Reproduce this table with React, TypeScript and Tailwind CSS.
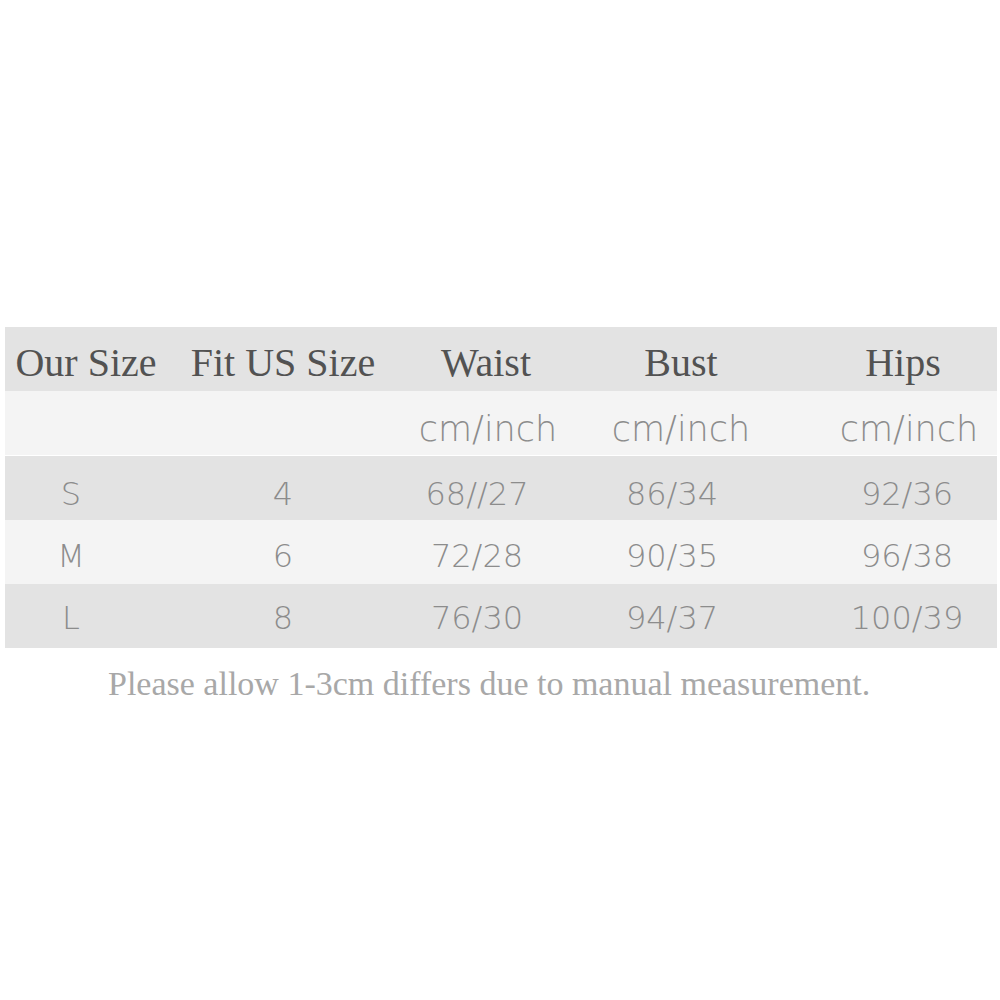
import React from "react";

const serif = { fontFamily: '"Liberation Serif", "Times New Roman", serif' };
const sans = { fontFamily: '"DejaVu Sans", "Liberation Sans", sans-serif' };

const cols = "grid grid-cols-[162px_232px_174px_216px_208px]";

const rows = [
  { bg: "bg-[#e3e3e3]", pt: "pt-[12px]", v: ["S", "4", "68//27", "86/34", "92/36"] },
  { bg: "bg-[#f4f4f4]", pt: "pt-[7px]", v: ["M", "6", "72/28", "90/35", "96/38"] },
  { bg: "bg-[#e3e3e3]", pt: "pt-[3px]", v: ["L", "8", "76/30", "94/37", "100/39"] },
];

export default function App() {
  return (
    <div className="w-[1000px] h-[1000px] bg-white pt-[327px]">
      <div className="ml-[5px] w-[992px]">
        <div className={`${cols} h-[64px] pt-[6px] bg-[#e3e3e3] items-center text-[40px] text-[#525252]`} style={serif}>
          <div className="text-center">Our Size</div>
          <div className="text-center">Fit US Size</div>
          <div className="text-center">Waist</div>
          <div className="text-center">Bust</div>
          <div className="text-center pl-[20px]">Hips</div>
        </div>
        <div className={`${cols} h-[64px] pt-[12px] bg-[#f4f4f4] items-center text-[35px] font-extralight text-[#8c8c8c]`} style={sans}>
          <div />
          <div />
          <div className="text-center pl-[4px]">cm/inch</div>
          <div className="text-center">cm/inch</div>
          <div className="text-center pl-[32px]">cm/inch</div>
        </div>
        <div className="h-[1px] bg-white" />
        {rows.map((r, i) => (
          <div key={i} className={`${cols} h-[64px] ${r.pt} ${r.bg} items-center text-[32px] font-extralight text-[#8c8c8c]`} style={sans}>
            <div className="text-center pr-[30px]">{r.v[0]}</div>
            <div className="text-center">{r.v[1]}</div>
            <div className="text-center pr-[18px]">{r.v[2]}</div>
            <div className="text-center pr-[18px]">{r.v[3]}</div>
            <div className="text-center pl-[28px]">{r.v[4]}</div>
          </div>
        ))}
      </div>
      <div className="pl-[108px] mt-[16px] text-[34px] leading-[40px] text-[#a8a8a8]" style={serif}>
        Please allow 1-3cm differs due to manual measurement.
      </div>
    </div>
  );
}
